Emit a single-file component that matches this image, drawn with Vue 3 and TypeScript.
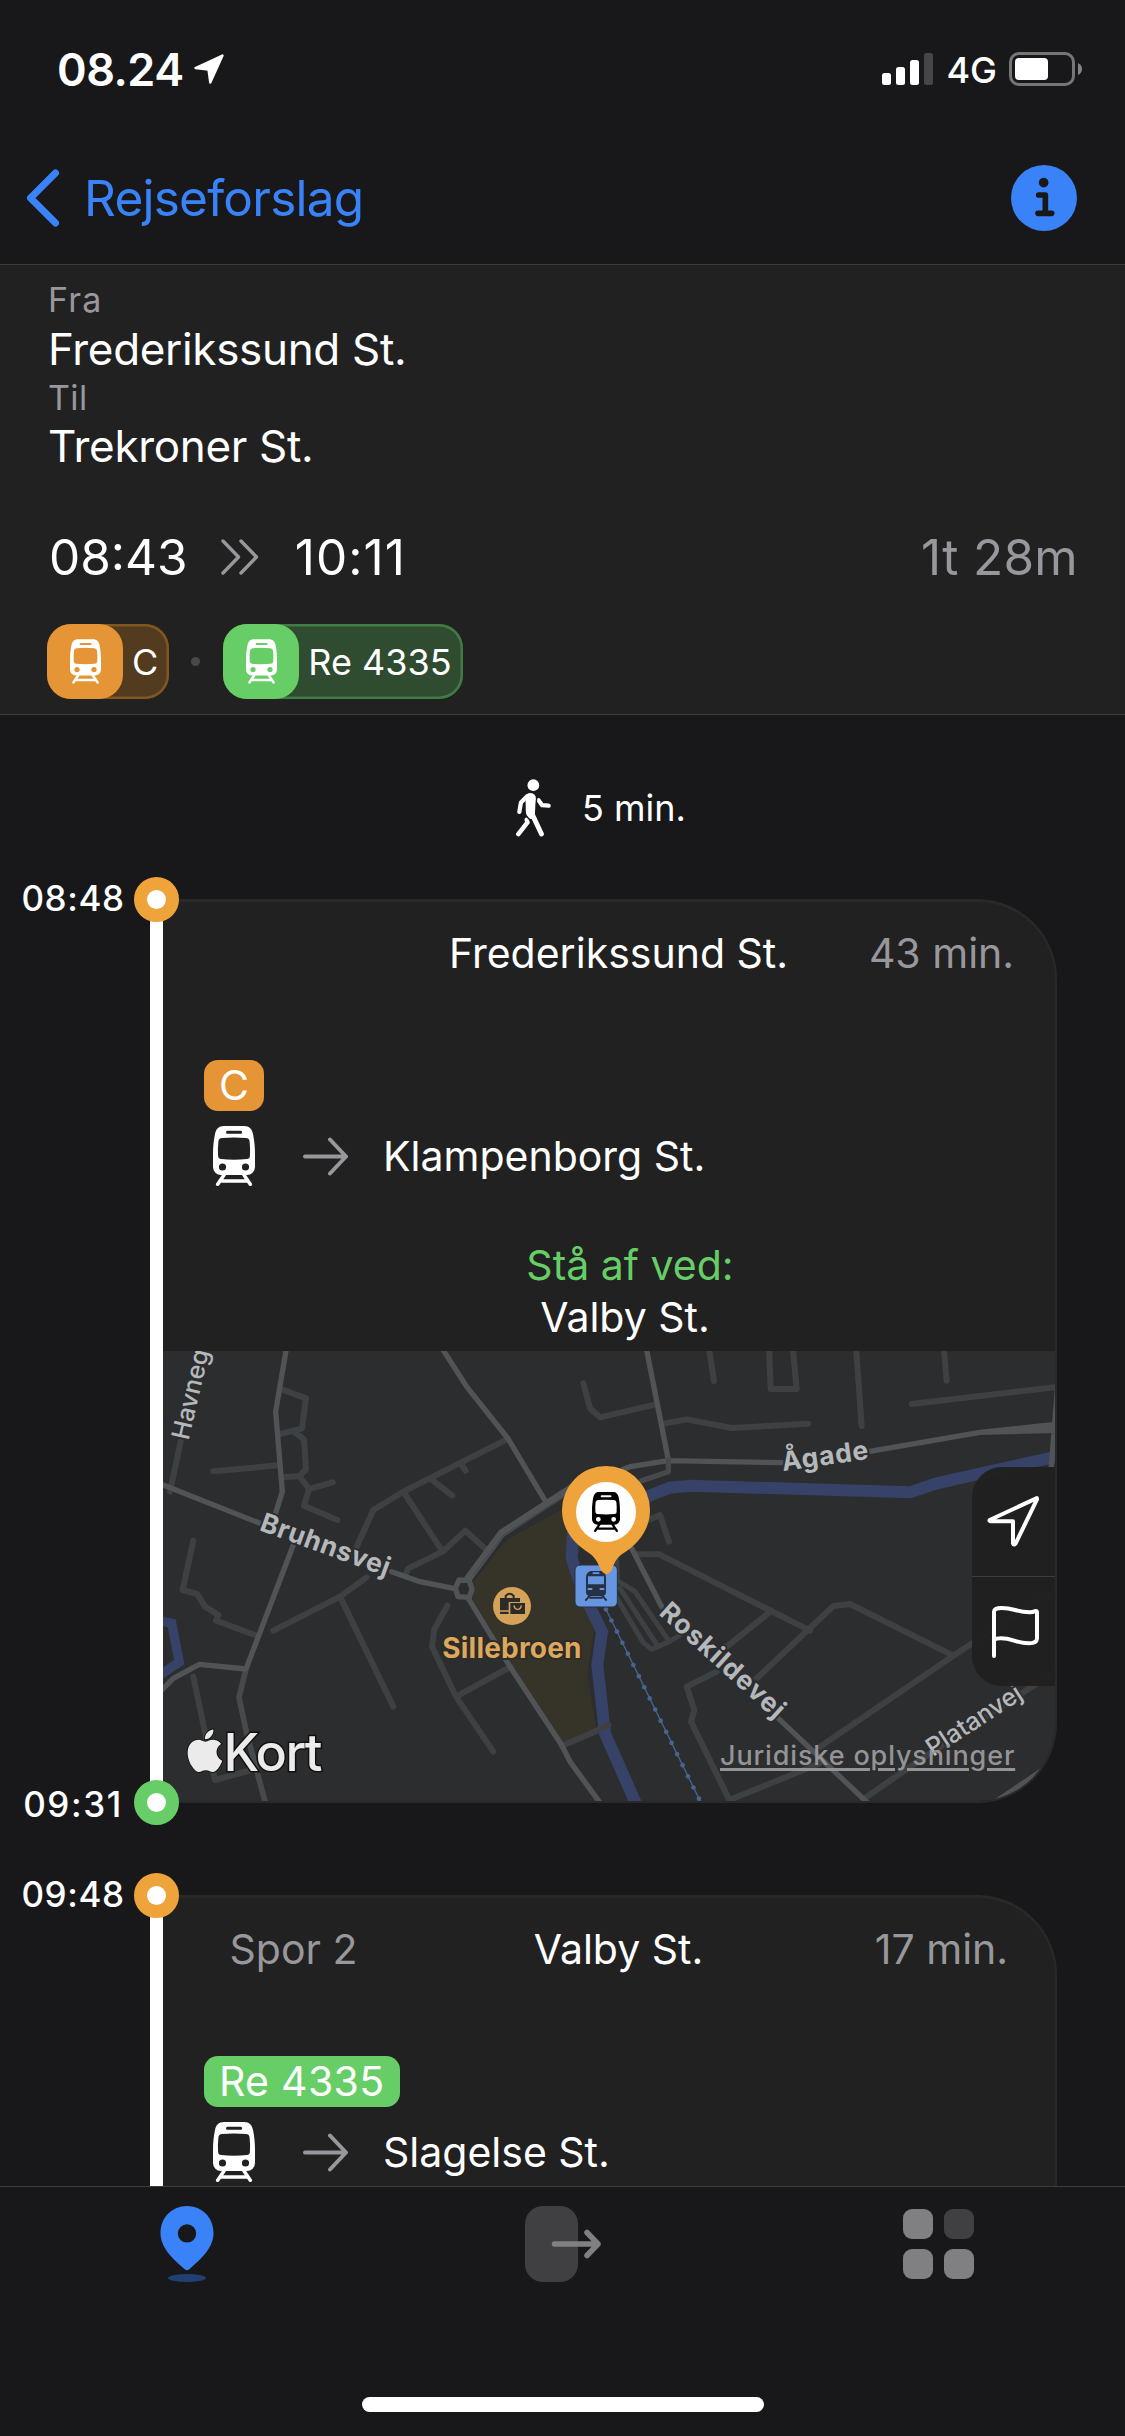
<script setup lang="ts">
import { defineComponent, h } from 'vue'

type Tone = 'orange' | 'green'

interface Leg {
  depart: string
  arrive?: string
  station: string
  track?: string
  duration: string
  line: string
  tone: Tone
  direction: string
  exit?: string
  hasMap: boolean
}

const pills: { line: string; tone: Tone }[] = [
  { line: 'C', tone: 'orange' },
  { line: 'Re 4335', tone: 'green' },
]

const legs: Leg[] = [
  {
    depart: '08:48',
    arrive: '09:31',
    station: 'Frederikssund St.',
    duration: '43 min.',
    line: 'C',
    tone: 'orange',
    direction: 'Klampenborg St.',
    exit: 'Valby St.',
    hasMap: true,
  },
  {
    depart: '09:48',
    station: 'Valby St.',
    track: 'Spor 2',
    duration: '17 min.',
    line: 'Re 4335',
    tone: 'green',
    direction: 'Slagelse St.',
    hasMap: false,
  },
]

// Front view of a train; the window, sign and lamps are cut out of the body.
const TrainIcon = defineComponent({
  setup: () => () =>
    h('svg', { viewBox: '0 0 42 60', fill: 'currentColor' }, [
      h('path', {
        'fill-rule': 'evenodd',
        d: 'M11 0H31C36.5 0 39 3 40 8C41.3 14 42 21 42 28V41A8 8 0 0 1 34 49H8A8 8 0 0 1 0 41V28C0 21 .7 14 2 8C3 3 5.5 0 11 0ZM14.5 4.8A1.4 1.4 0 0 0 14.5 7.8H27.7A1.4 1.4 0 0 0 27.7 4.8ZM9 12Q21 11 33 12Q36.3 12.2 36.6 15.5Q37.4 23 36.9 30Q36.8 32.7 34 33Q21 34.3 8 33Q5.2 32.7 5.1 30Q4.6 23 5.4 15.5Q5.7 12.2 9 12ZM9.5 37.4A3.6 3.6 0 1 0 9.5 44.6A3.6 3.6 0 1 0 9.5 37.4ZM32.5 37.4A3.6 3.6 0 1 0 32.5 44.6A3.6 3.6 0 1 0 32.5 37.4Z',
      }),
      h('path', {
        d: 'M11 49L4.7 58.3M31 49L37.3 58.3M8 55H34',
        fill: 'none',
        stroke: 'currentColor',
        'stroke-width': 3.5,
        'stroke-linecap': 'round',
      }),
    ]),
})

const railSleepers = Array.from({ length: 18 }, (_, i) => ({
  x: 78 + i * 16.4,
  y: 808 + i * 33.4,
}))
</script>

<template>
  <div class="screen">
    <header class="status">
      <span class="clock">08.24</span>
      <svg class="loc" viewBox="0 0 30 30">
        <path d="M28.500 1.500L1.500 14L14.500 15.500L16.300 28.500Z" fill="#fff" stroke="#fff" stroke-width="2.400" stroke-linejoin="round" />
      </svg>
      <svg class="bars" viewBox="0 0 51 32">
        <rect x="0" y="20" width="9" height="12" rx="2.500" fill="#fff" />
        <rect x="14" y="14" width="9" height="18" rx="2.500" fill="#fff" />
        <rect x="28" y="7" width="9" height="25" rx="2.500" fill="#fff" />
        <rect x="42" y="0" width="9" height="32" rx="2.500" fill="#464648" />
      </svg>
      <span class="net">4G</span>
      <svg class="battery" viewBox="0 0 74 34">
        <rect x="1.500" y="1.500" width="63" height="31" rx="8.500" fill="none" stroke="#767678" stroke-width="3" />
        <rect x="6" y="6" width="33" height="22" rx="4" fill="#fff" />
        <path d="M69 11Q73 13 73 17Q73 21 69 23Z" fill="#858587" />
      </svg>
    </header>

    <nav class="nav">
      <svg class="back" viewBox="0 0 34 58">
        <path d="M29.500 4L4.500 29L29.500 54" fill="none" stroke="#3a82f7" stroke-width="7" stroke-linecap="round" stroke-linejoin="round" />
      </svg>
      <span class="back-label">Rejseforslag</span>
      <svg class="info" viewBox="0 0 198 198">
        <circle cx="99" cy="99" r="99" fill="#3a82f7" />
        <circle cx="98" cy="53" r="14.500" fill="#18181a" />
        <path d="M83 90H103V144M81 145H122" fill="none" stroke="#18181a" stroke-width="17" stroke-linecap="round" stroke-linejoin="round" />
      </svg>
    </nav>

    <section class="summary">
      <div class="lbl">Fra</div>
      <div class="place">Frederikssund St.</div>
      <div class="lbl til">Til</div>
      <div class="place">Trekroner St.</div>
      <div class="times">
        <span>08:43</span>
        <svg class="chev" viewBox="0 0 38 36">
          <path d="M2 2L17.500 18L2 34M20 2L35.500 18L20 34" fill="none" stroke="#98979c" stroke-width="3.400" stroke-linecap="round" stroke-linejoin="round" />
        </svg>
        <span class="arr">10:11</span>
        <span class="total">1t 28m</span>
      </div>
      <div class="pills">
        <template v-for="(p, i) in pills" :key="p.line">
          <i v-if="i" class="sep"></i>
          <div class="pill" :class="p.tone">
            <span class="pill-ico"><TrainIcon class="t-sm" /></span>
            <span class="pill-txt">{{ p.line }}</span>
          </div>
        </template>
      </div>
    </section>

    <main class="scroll">
      <div class="walk">
        <svg class="walker" viewBox="48 25 107 178">
          <g fill="none" stroke="#fff" stroke-width="13" stroke-linecap="round" stroke-linejoin="round">
            <path d="M82 78L63 97L58 126" />
            <path d="M117 90L128 105.500L148 107" />
            <path d="M97 132L126 194" stroke-width="15" />
            <path d="M81 150L83 158L55 194" stroke-width="14" />
          </g>
          <path d="M92 68Q109 70 109 86L106 126L106 150L90 147Q77 138 78 124L77 84Q78 68 92 68Z" fill="#fff" />
          <path d="M111 84L110 112" stroke="#18181a" stroke-width="4" />
          <path d="M76 134L96 158" stroke="#18181a" stroke-width="4" />
          <circle cx="101" cy="44" r="18" fill="#fff" />
        </svg>
        <span>5 min.</span>
      </div>

      <article v-for="leg in legs" :key="leg.depart" class="leg" :class="{ tall: leg.hasMap }">
        <div class="clocks">
          <span>{{ leg.depart }}</span>
          <span v-if="leg.arrive" class="narrow">{{ leg.arrive }}</span>
        </div>
        <div class="rail">
          <i class="dot orange"></i>
          <i class="track"></i>
          <i v-if="leg.arrive" class="dot green"></i>
        </div>
        <div class="card">
          <div class="head">
            <span class="dim">{{ leg.track }}</span>
            <span>{{ leg.station }}</span>
            <span class="dim dur">{{ leg.duration }}</span>
          </div>
          <span class="badge" :class="leg.tone">{{ leg.line }}</span>
          <div class="dir">
            <TrainIcon class="t-lg" />
            <svg class="arrow" viewBox="0 0 45 39">
              <path d="M2 19.500H43M27 2.500L43 19.500L27 36.500" fill="none" stroke="#98979c" stroke-width="4" stroke-linecap="round" stroke-linejoin="round" />
            </svg>
            <span>{{ leg.direction }}</span>
          </div>
          <div v-if="leg.exit" class="exit">
            <span class="exit-lbl">Stå af ved:</span>
            <span class="exit-st">{{ leg.exit }}</span>
          </div>

          <div v-if="leg.hasMap" class="map">
            <svg class="map-art" viewBox="0 0 893 450">
              <g transform="translate(-23 -11) scale(.33333)" fill="none" stroke-linecap="round" stroke-linejoin="round">
                <path d="M1000 725L1100 600L1270 505L1330 590L1300 700L1362 870L1342 1000L1368 1160L1265 1212L1110 970L1000 780Z" fill="#363329" />
                <path d="M60 843L95 850L118 966L55 1008" stroke="#364267" stroke-width="28" stroke-linejoin="miter" />
                <g stroke="#3e4143" stroke-width="18">
                  <path d="M122 305L90 455M220 394L415 376M425 148L498 175L486 265L420 282M465 278L492 298L498 388L478 408L430 412M478 408L507 447L578 427M507 447L492 497L592 540" />
                  <path d="M160 602L128 750L172 762L195 800L235 825L228 842L345 885M160 1010L225 1320L335 1290" />
                  <path d="M1103 297L790 455L700 510L650 620M680 712L600 770L400 872M600 770L760 1100M790 455L908 635M870 415L937 467M965 375L977 392" />
                  <path d="M1040 630L976 572L908 635L805 685L798 700M922 797L883 868L876 920L948 1070L1060 1235M948 1070L1112 980M1265 1218L1405 1157" />
                </g>
                <path d="M318 987L297 1072L320 1180L378 1395" stroke="#464a4c" stroke-width="17" />
                <g stroke="#505456" stroke-width="16">
                  <path d="M440 20L407 215L427 455L405 525M50 427L360 550M755 695L840 725L940 745M903 20L980 140L1105 297L1220 490M460 615L318 987L178 973L100 1015L50 1065" />
                  <path d="M985 775L1110 980L1265 1215L1290 1265L1385 1395M957 720L988 722L996 748L988 772L954 770L946 745Z" />
                  <path d="M985 715L1085 580L1220 492L1310 435" stroke-width="24" />
                </g>
                <path d="M1000 705L1092 585L1220 503L1300 452" stroke="#3c4042" stroke-width="2.500" />
              </g>

              <g transform="translate(417 -11) scale(.33333)" fill="none" stroke-linecap="round" stroke-linejoin="round">
                <path d="M-20 560L-25 655L10 760L66 875L52 975L75 1180L172 1400M1440 347L1070 430L990 457L330 437L270 443L200 470L100 520L-20 590" stroke="#364267" stroke-width="36" stroke-linejoin="miter" />
                <g stroke="#3e4143" stroke-width="18">
                  <path d="M10 130L30 205L60 232L228 193M386 20L402 123M567 20L572 147L650 147L638 20M828 20L845 258M1091 20L1100 122M995 192L1440 140M255 250L320 238L455 264L685 251" />
                  <path d="M205 540L240 525L267 605M170 643L238 643L380 715L690 872M575 812L440 920M525 1020L760 798L810 792L1120 947M720 1220L1120 947L1440 735" />
                  <path d="M410 995L320 1040L343 1110L333 1145L448 1380L720 1270M860 1370L1050 1240L1440 985M0 1195L85 1155" />
                  <path d="M110 660L112 722L165 755L268 905L215 928L190 908L105 765M120 745L228 910M300 885L268 905" stroke-width="15" />
                </g>
                <g stroke="#505456" stroke-width="16">
                  <path d="M198 20L265 360M130 388L150 380L265 362L605 368M865 335L1200 277L1440 252M1200 277L1440 271M1433 140L1413 390M155 625L245 800M595 1135L875 1400M1225 1400L1430 1262" />
                  <path d="M265 360L265 395L185 422" stroke="#464a4c" />
                </g>
                <path d="M78 808L365 1392" stroke="#47658e" stroke-width="4" />
                <circle v-for="s in railSleepers" :key="s.y" :cx="s.x" :cy="s.y" r="7" fill="#47658e" />

                <rect x="-15" y="675" width="127" height="126" rx="15" fill="#6796e0" stroke="#2a3140" stroke-width="3" />
                <g stroke="none" fill="#263143">
                  <path fill-rule="evenodd" d="M32 693H64Q78 697 78 712V757Q78 768 66 768H30Q18 768 18 757V712Q18 697 32 693ZM38 697V702H58V697ZM24 709V733H72V709ZM23 744V750H37V744ZM59 744V750H73V744Z" />
                  <path d="M30 766L16 782M66 766L80 782M28 773H68" stroke="#263143" stroke-width="6" stroke-linecap="butt" />
                </g>
                <path d="M78 378A132 132 0 0 1 210 510C210 572 170 615 130 640C108 654 102 672 95 690Q80 714 63 690C54 672 48 654 28 640C-15 612 -54 572 -54 510A132 132 0 0 1 78 378Z" fill="#efa33b" />
                <circle cx="78" cy="516" r="90" fill="#fff" />
              </g>

              <circle cx="349" cy="255" r="19" fill="#d5a25a" />
              <g transform="translate(-23 -11) scale(.33333)" fill="#2b2c2a">
                <path d="M1080 774H1140V786H1106V811H1080ZM1080 815H1106V822H1080ZM1111 789H1155V822H1111Z" />
                <path d="M1097 775V768Q1109 755 1121 768V775" fill="none" stroke="#2b2c2a" stroke-width="6" />
                <path d="M1122 796Q1124 808 1133 808Q1142 808 1144 796" fill="none" stroke="#d5a25a" stroke-width="4" />
              </g>

              <g class="street">
                <text transform="translate(25.500 90) rotate(-77)" class="thin">Havneg</text>
                <text transform="translate(95.500 179) rotate(20)" letter-spacing=".6">Bruhnsvej</text>
                <text transform="translate(620 120) rotate(-8)" letter-spacing=".8">Ågade</text>
                <text transform="translate(495 263) rotate(42)" letter-spacing="1">Roskildevej</text>
                <text transform="translate(770 406) rotate(-33)" class="thin">Platanvej</text>
              </g>
              <text class="poi" x="349" y="307" text-anchor="middle">Sillebroen</text>

              <g transform="translate(20.700 378.500) scale(1.770)">
                <path fill="#ebebeb" stroke="#111" stroke-width="1" paint-order="stroke" d="M12.152 6.896c-.948 0-2.415-1.078-3.960-1.040-2.040.027-3.910 1.183-4.961 3.014-2.117 3.675-.546 9.103 1.519 12.090 1.013 1.454 2.208 3.090 3.792 3.039 1.520-.065 2.090-.987 3.935-.987 1.831 0 2.350.987 3.960.948 1.637-.026 2.676-1.480 3.676-2.948 1.156-1.688 1.636-3.325 1.662-3.415-.039-.013-3.182-1.221-3.220-4.857-.026-3.040 2.480-4.494 2.597-4.559-1.429-2.090-3.623-2.324-4.390-2.376-2-.156-3.675 1.090-4.610 1.090zM15.530 3.830c.843-1.012 1.400-2.427 1.245-3.830-1.207.052-2.662.805-3.532 1.818-.780.896-1.454 2.338-1.273 3.714 1.338.104 2.715-.688 3.559-1.701" />
              </g>
              <text class="brand" x="60.500" y="420">Kort</text>
            </svg>
            <TrainIcon class="pin-train" />
            <a class="legal">Juridiske oplysninger</a>
            <div class="tools">
              <span class="tool">
                <svg viewBox="0 0 156 156">
                  <path d="M148 7L8 72Q6 75 12 76H78V142Q80 149 86 142L150 10Q151 5 148 7Z" fill="none" stroke="#fff" stroke-width="12" stroke-linejoin="round" />
                </svg>
              </span>
              <span class="tool">
                <svg viewBox="0 0 156 156">
                  <path d="M21 150V17Q22 6 44 6C80 6 88 18 128 19Q138 19 145 15Q151 14 150 22V98Q149 112 126 112C86 112 76 96 40 97Q28 97 21 101" fill="none" stroke="#fff" stroke-width="12" stroke-linecap="round" stroke-linejoin="round" />
                </svg>
              </span>
            </div>
          </div>
        </div>
      </article>
    </main>

    <footer class="tabs">
      <div class="tab-row">
        <div class="tab">
          <svg width="54" height="76" viewBox="0 0 54 76">
            <path fill-rule="evenodd" fill="#3a82f7" d="M27 0C42 0 53.500 11.500 53.500 27C53.500 42 41 53 29 63.500Q27 65 25 63.500C13 53 .5 42 .5 27C.5 11.500 12 0 27 0ZM27 18.200A9.200 9.200 0 1 0 27 36.600A9.200 9.200 0 1 0 27 18.200Z" />
            <ellipse cx="27" cy="72" rx="19" ry="4" fill="#213f70" />
          </svg>
        </div>
        <div class="tab">
          <svg width="76" height="76" viewBox="0 0 76 76">
            <rect width="53" height="76" rx="18" fill="#404042" />
            <path d="M29.500 38H73M62 26.500L73 38L62 49.500" fill="none" stroke="#808082" stroke-width="5.500" stroke-linecap="round" stroke-linejoin="round" />
          </svg>
        </div>
        <div class="tab last">
          <svg width="71" height="70" viewBox="0 0 71 70">
            <rect width="30" height="30" rx="9" fill="#808082" />
            <rect x="41" width="30" height="30" rx="9" fill="#404042" />
            <rect y="40" width="30" height="30" rx="9" fill="#808082" />
            <rect x="41" y="40" width="30" height="30" rx="9" fill="#808082" />
          </svg>
        </div>
      </div>
      <i class="home"></i>
    </footer>
  </div>
</template>

<style>
body {
  margin: 0;
  background: #18181a;
}
</style>

<style scoped>
.screen {
  box-sizing: border-box;
  width: 1125px;
  height: 2436px;
  overflow: hidden;
  display: flex;
  flex-direction: column;
  background: #18181a;
  color: #fff;
  font-family: Inter, "Liberation Sans", sans-serif;
}
svg {
  display: block;
  flex: none;
}
i {
  display: block;
}

.status {
  display: flex;
  align-items: center;
  height: 138px;
  flex: none;
  padding: 0 42px 0 57px;
}
.clock {
  font-size: 45px;
  font-weight: 600;
  letter-spacing: -0.5px;
}
.loc {
  width: 30px;
  height: 30px;
  margin-left: 10px;
}
.bars {
  width: 51px;
  height: 32px;
  margin-left: auto;
}
.net {
  font-size: 36px;
  font-weight: 450;
  margin: 2px 12px 0 13px;
}
.battery {
  width: 74px;
  height: 34px;
}

.nav {
  box-sizing: border-box;
  display: flex;
  align-items: center;
  height: 127px;
  padding: 0 48px 7px 26px;
  border-bottom: 1px solid #3d3d3f;
  flex: none;
}
.back {
  width: 34px;
  height: 58px;
}
.back-label {
  color: #3a82f7;
  font-size: 49.5px;
  letter-spacing: -0.75px;
  margin: 0 auto 0 24px;
}
.info {
  width: 66px;
  height: 66px;
}

.summary {
  box-sizing: border-box;
  height: 450px;
  flex: none;
  padding: 11px 47px 0 48px;
  background: #212121;
  border-bottom: 1px solid #3d3d3f;
}
.lbl {
  font-size: 34px;
  line-height: 48px;
  letter-spacing: 1.2px;
  color: #98979c;
}
.til {
  line-height: 47px;
  letter-spacing: 0.4px;
}
.place {
  font-size: 44px;
  line-height: 50px;
  letter-spacing: -0.33px;
}
.times {
  display: flex;
  align-items: center;
  height: 60px;
  margin: 56px 0 0 1px;
  font-size: 49.5px;
}
.chev {
  width: 38px;
  height: 36px;
  margin: 0 36px 0 33px;
}
.arr {
  letter-spacing: 1.1px;
}
.total {
  margin-left: auto;
  color: #98979c;
  letter-spacing: 0.3px;
}
.pills {
  display: flex;
  align-items: center;
  margin: 37px 0 0 -1px;
}
.sep {
  width: 9px;
  height: 9px;
  border-radius: 50%;
  background: #48484a;
  margin: 0 23px 0 22px;
}
.pill {
  display: flex;
  align-items: center;
  height: 75px;
  border-radius: 24px;
}
.pill.orange {
  background: #533b1f;
  box-shadow: inset 0 0 0 2.5px #80571f;
}
.pill.green {
  background: #2f4b30;
  box-shadow: inset 0 0 0 2.5px #417c44;
}
.pill-ico {
  display: flex;
  align-items: center;
  justify-content: center;
  width: 76px;
  height: 75px;
  border-radius: 24px;
}
.orange .pill-ico {
  background: #e59536;
}
.green .pill-ico {
  background: #67ce67;
}
.t-sm {
  width: 31px;
  height: 45px;
}
.pill-txt {
  font-size: 36px;
  padding: 0 11px 0 9px;
}

.scroll {
  flex: 1;
  min-height: 0;
  overflow: hidden;
}
.walk {
  box-sizing: border-box;
  height: 162px;
  padding: 24px 0 0 516px;
  display: flex;
  align-items: center;
  font-size: 36px;
}
.walker {
  width: 35px;
  height: 58px;
  margin-right: 31px;
}

.leg {
  display: flex;
  height: 720px;
  margin-bottom: 48px;
}
.leg.tall {
  height: 948px;
}
.clocks {
  box-sizing: border-box;
  width: 134px;
  padding-left: 12px;
  display: flex;
  flex-direction: column;
  justify-content: space-between;
  align-items: center;
  font-size: 35px;
  font-weight: 500;
  line-height: 42px;
  letter-spacing: 0.6px;
}
.clocks .narrow {
  letter-spacing: 1.6px;
}
.rail {
  width: 45px;
  display: flex;
  flex-direction: column;
  align-items: center;
  z-index: 1;
}
.dot {
  position: relative;
  box-sizing: border-box;
  width: 45px;
  height: 45px;
  border-radius: 50%;
  background: #fff;
  border: 13.5px solid;
}
.dot.orange {
  border-color: #efa33b;
}
.dot.green {
  border-color: #67ce67;
}
.track {
  flex: 1;
  width: 13px;
  margin: -2px 0;
  background: #fff;
}
.card {
  box-sizing: border-box;
  width: 894px;
  margin: 22px 0 22px -16px;
  background: #212121;
  border: solid #29292a;
  border-width: 3px 2px 2px 0;
  border-radius: 0 80px 80px 0;
  overflow: hidden;
  font-size: 41px;
}
.head {
  display: grid;
  grid-template-columns: 261px 389px 1fr;
  line-height: 102px;
  text-align: center;
}
.dim {
  color: #98979c;
}
.dur {
  padding-left: 15px;
}
.badge {
  display: block;
  width: max-content;
  margin: 56px 0 0 41px;
  padding: 0 15px;
  line-height: 51px;
  border-radius: 14px;
}
.badge.orange {
  background: #e59536;
}
.badge.green {
  background: #67ce67;
  letter-spacing: 0.3px;
  padding-right: 16px;
}
.dir {
  display: flex;
  align-items: center;
  margin: 15px 0 0 50px;
}
.t-lg {
  width: 42px;
  height: 60px;
}
.arrow {
  width: 45px;
  height: 39px;
  margin: 0 35px 0 48px;
}
.exit {
  display: flex;
  flex-direction: column;
  align-items: center;
  margin: 54px 0 8px;
  padding-left: 42px;
  line-height: 51.5px;
}
.exit-lbl {
  color: #67ce67;
}
.exit-st {
  padding-right: 10px;
}

.map {
  position: relative;
  height: 450px;
  width: 893px;
  background: #2c2d2f;
}
.map-art {
  width: 893px;
  height: 450px;
}
.street text {
  fill: #b5b8bb;
  font-size: 26.5px;
  font-weight: 700;
  stroke: #2c2d2f;
  stroke-width: 4px;
  paint-order: stroke;
}
.street .thin {
  font-size: 25px;
  font-weight: 550;
}
.poi {
  font-size: 28px;
  font-weight: 650;
  letter-spacing: 0.2px;
  fill: #dda75c;
  stroke: #2c2c2a;
  stroke-width: 4px;
  paint-order: stroke;
}
.brand {
  font-size: 52px;
  font-weight: 500;
  letter-spacing: -1.6px;
  fill: #ebebeb;
  stroke: #111;
  stroke-width: 3px;
  paint-order: stroke;
}
.pin-train {
  position: absolute;
  left: 429px;
  top: 140px;
  width: 28px;
  height: 42px;
  color: #000;
}
.legal {
  position: absolute;
  left: 557px;
  top: 389px;
  line-height: 32px;
  font-size: 27px;
  font-weight: 550;
  letter-spacing: 0.85px;
  color: #949496;
  text-decoration: underline;
  text-decoration-thickness: 3px;
  text-underline-offset: 3px;
}
.tools {
  position: absolute;
  right: 0;
  top: 116px;
  width: 84px;
  height: 219px;
  border-radius: 30px 0 0 30px;
  background: rgba(32, 32, 32, 0.97);
  display: flex;
  flex-direction: column;
}
.tool {
  flex: 1;
  display: flex;
  align-items: center;
  justify-content: center;
  padding: 1px 3px 0 0;
}
.tool + .tool {
  border-top: 1px solid #3d3d3e;
}
.tool svg {
  width: 52px;
  height: 52px;
}

.tabs {
  box-sizing: border-box;
  height: 250px;
  flex: none;
  border-top: 1px solid #3d3d3f;
}
.tab-row {
  display: flex;
  height: 114px;
}
.tab {
  flex: 1;
  display: flex;
  align-items: center;
  justify-content: center;
  padding-right: 2px;
}
.tab.last {
  padding-right: 0;
}
.home {
  width: 402px;
  height: 15px;
  border-radius: 8px;
  background: #fff;
  margin: 96px auto 0;
}
</style>
